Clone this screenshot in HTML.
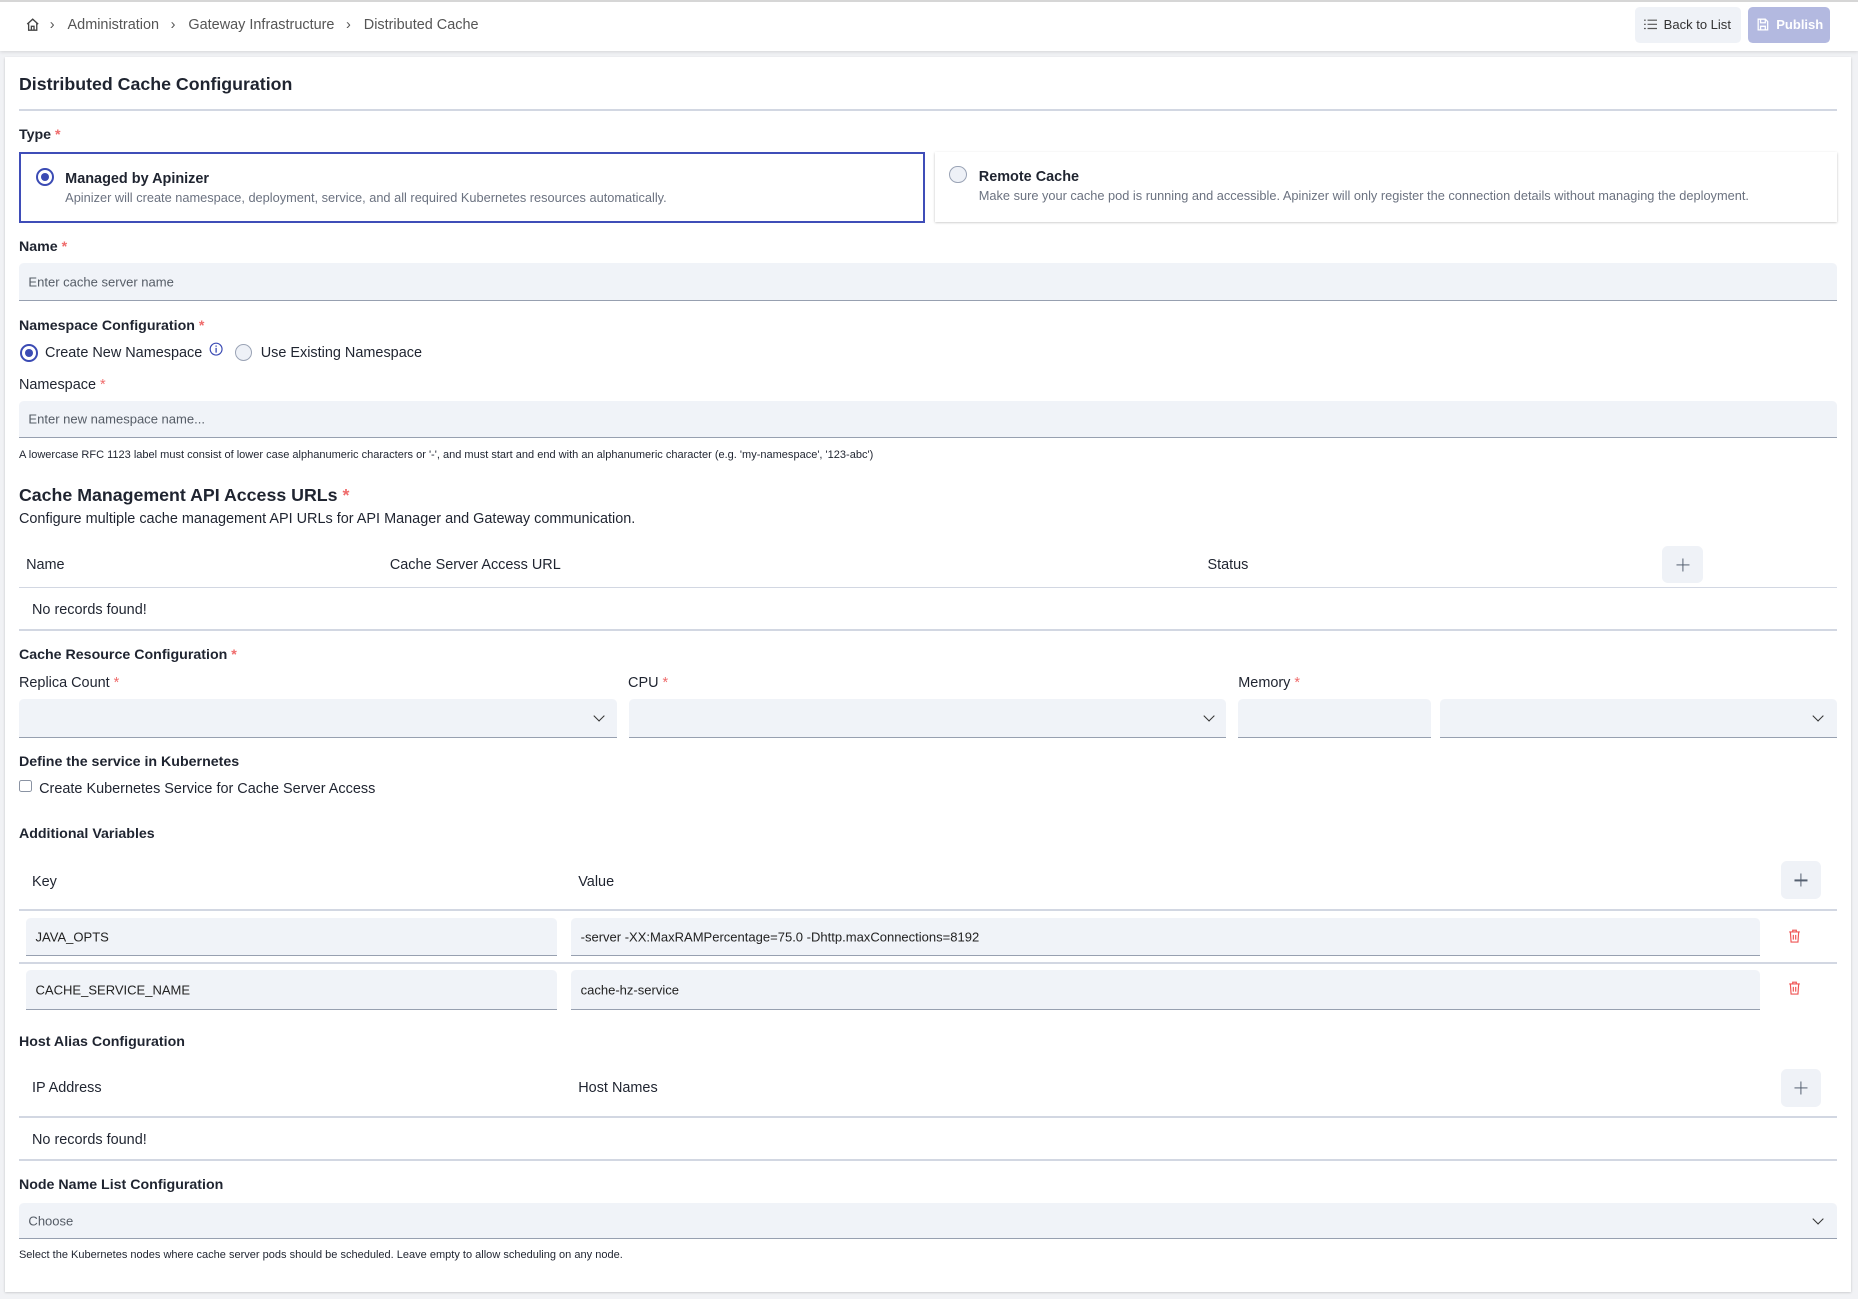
<!DOCTYPE html>
<html><head><meta charset="utf-8">
<style>
html,body{margin:0;padding:0}
body{width:1568px;height:1096px;zoom:1.18495;background:#f1f2f5;font-family:"Liberation Sans",Arial,sans-serif;color:#1f2430;position:relative;overflow:hidden}
.a{position:absolute;white-space:nowrap}
.t{position:absolute;white-space:nowrap;line-height:16px;font-size:12.2px;margin-top:1.5px}
.b{font-weight:bold}
.req{color:#ef6b6b}
.inp{position:absolute;background:#f0f3f8;border-bottom:1.5px solid #97a0b0;border-radius:4px 4px 0 0;box-sizing:border-box}
.ph{position:absolute;left:8px;top:50%;transform:translateY(-50%);font-size:11px;color:#555c66}
.hr{position:absolute;height:1.5px;background:#d2d7e2}
.plus{position:absolute;width:34px;height:31px;background:#eff2f7;border-radius:5px}
.plus:before,.plus:after{content:"";position:absolute;background:#556070;left:50%;top:50%}
.plus:before{width:11px;height:1px;transform:translate(-50%,-50%)}
.plus:after{width:1px;height:11px;transform:translate(-50%,-50%)}
.chev{position:absolute;width:6px;height:6px;border-right:1.3px solid #333;border-bottom:1.3px solid #333;transform:rotate(45deg)}
.radio{position:absolute;width:13px;height:13px;border-radius:50%;border:1.6px solid #9aa3b5;background:#eef1f7}
.radio.on{border:2px solid #3b4bb4;background:#fff;width:12px;height:12px}
.radio.on:after{content:"";position:absolute;left:2.5px;top:2.5px;width:7px;height:7px;border-radius:50%;background:#3b4bb4}
</style></head><body>
<div class="a" style="left:0;top:0;width:1568px;height:43px;background:#fff;box-shadow:0 1px 3px rgba(0,0,0,.12);border-top:2px solid #d6d6d6;box-sizing:border-box"></div>
<svg class="a" style="left:21px;top:14px" width="13" height="13" viewBox="0 0 14 14"><path d="M2 6.5L7 2l5 4.5M3.3 5.5V12h7.4V5.5M5.8 12V8.5h2.4V12" fill="none" stroke="#444" stroke-width="1.2"/></svg>
<div class="t" style="left:42px;top:12px;color:#555">›</div>
<div class="t" style="left:57px;top:12px;color:#555">Administration</div>
<div class="t" style="left:144px;top:12px;color:#555">›</div>
<div class="t" style="left:159px;top:12px;color:#555">Gateway Infrastructure</div>
<div class="t" style="left:292px;top:12px;color:#555">›</div>
<div class="t" style="left:307px;top:12px;color:#555">Distributed Cache</div>
<div class="a" style="left:1380px;top:6px;width:89px;height:30px;background:#eff2f7;border-radius:4px"></div>
<svg class="a" style="left:1387px;top:16px" width="11" height="9" viewBox="0 0 11 9"><path d="M0 1h1.5M3 1h8M0 4.5h1.5M3 4.5h8M0 8h1.5M3 8h8" stroke="#555" stroke-width="1"/></svg>
<div class="t" style="left:1404px;top:12px;font-size:11px;color:#333">Back to List</div>
<div class="a" style="left:1475px;top:6px;width:69px;height:30px;background:#b3b9e0;border-radius:4px"></div>
<svg class="a" style="left:1483px;top:15px" width="10" height="11" viewBox="0 0 10 11"><path d="M1 1h6l2 2v7H1zM3 1v3h4V1M3 10V7h4v3" fill="none" stroke="#fff" stroke-width="1.1"/></svg>
<div class="t b" style="left:1499px;top:12px;font-size:11px;color:#fff">Publish</div>

<div class="a" style="left:4px;top:48px;width:1558px;height:1042px;background:#fff;box-shadow:0 1px 2px rgba(0,0,0,.2)"></div>
<div class="t" style="left:16px;top:61px;font-size:15px;line-height:18px;font-weight:bold">Distributed Cache Configuration</div>
<div class="hr" style="left:16px;top:92px;width:1534px"></div>

<div class="t b" style="left:16px;top:105px;font-size:12px">Type <span class="req">*</span></div>
<div class="a" style="left:16px;top:128px;width:765px;height:60px;border:2px solid #3f4db8;box-sizing:border-box"></div>
<div class="radio on" style="left:30px;top:142px"></div>
<div class="t" style="left:55px;top:142px;font-weight:bold;font-size:12.2px">Managed by Apinizer</div>
<div class="t" style="left:55px;top:158px;font-size:10.8px;color:#6b7280">Apinizer will create namespace, deployment, service, and all required Kubernetes resources automatically.</div>
<div class="a" style="left:789px;top:128px;width:761px;height:59px;background:#fff;box-shadow:0 1px 2px rgba(0,0,0,.25)"></div>
<div class="radio" style="left:801px;top:140px"></div>
<div class="t" style="left:826px;top:140px;font-weight:bold;font-size:12.2px">Remote Cache</div>
<div class="t" style="left:826px;top:156px;font-size:10.8px;color:#6b7280">Make sure your cache pod is running and accessible. Apinizer will only register the connection details without managing the deployment.</div>

<div class="t b" style="left:16px;top:199px;font-size:12px">Name <span class="req">*</span></div>
<div class="inp" style="left:16px;top:222px;width:1534px;height:32px"><span class="ph">Enter cache server name</span></div>

<div class="t b" style="left:16px;top:266px;font-size:12px">Namespace Configuration <span class="req">*</span></div>
<div class="radio on" style="left:17px;top:290px"></div>
<div class="t" style="left:38px;top:289px">Create New Namespace</div>
<svg class="a" style="left:176px;top:289px" width="12" height="12" viewBox="0 0 12 12"><circle cx="6" cy="6" r="5" fill="none" stroke="#3b4bb4" stroke-width="1"/><path d="M6 5v4M6 3v1" stroke="#3b4bb4" stroke-width="1.1"/></svg>
<div class="radio" style="left:198px;top:290px"></div>
<div class="t" style="left:220px;top:289px">Use Existing Namespace</div>
<div class="t" style="left:16px;top:316px">Namespace <span class="req">*</span></div>
<div class="inp" style="left:16px;top:338px;width:1534px;height:32px"><span class="ph">Enter new namespace name...</span></div>
<div class="t" style="left:16px;top:375px;font-size:9.3px">A lowercase RFC 1123 label must consist of lower case alphanumeric characters or '-', and must start and end with an alphanumeric character (e.g. 'my-namespace', '123-abc')</div>

<div class="t" style="left:16px;top:408px;font-size:15px;line-height:18px;font-weight:bold">Cache Management API Access URLs <span class="req">*</span></div>
<div class="t" style="left:16px;top:429px">Configure multiple cache management API URLs for API Manager and Gateway communication.</div>
<div class="t" style="left:22px;top:468px">Name</div>
<div class="t" style="left:329px;top:468px">Cache Server Access URL</div>
<div class="t" style="left:1019px;top:468px">Status</div>
<div class="plus" style="left:1403px;top:461px"></div>
<div class="hr" style="left:16px;top:495px;width:1534px"></div>
<div class="t" style="left:27px;top:506px">No records found!</div>
<div class="hr" style="left:16px;top:531px;width:1534px"></div>

<div class="t b" style="left:16px;top:544px;font-size:12px">Cache Resource Configuration <span class="req">*</span></div>
<div class="t" style="left:16px;top:567px">Replica Count <span class="req">*</span></div>
<div class="t" style="left:530px;top:567px">CPU <span class="req">*</span></div>
<div class="t" style="left:1045px;top:567px">Memory <span class="req">*</span></div>
<div class="inp" style="left:16px;top:590px;width:505px;height:33px"></div><div class="chev" style="left:502px;top:601px"></div>
<div class="inp" style="left:531px;top:590px;width:504px;height:33px"></div><div class="chev" style="left:1017px;top:601px"></div>
<div class="inp" style="left:1045px;top:590px;width:163px;height:33px"></div>
<div class="inp" style="left:1215px;top:590px;width:335px;height:33px"></div><div class="chev" style="left:1531px;top:601px"></div>

<div class="t b" style="left:16px;top:634px;font-size:12px">Define the service in Kubernetes</div>
<div class="a" style="left:16px;top:658px;width:9px;height:9px;border:1.3px solid #8a93a3;border-radius:2px"></div>
<div class="t" style="left:33px;top:657px">Create Kubernetes Service for Cache Server Access</div>

<div class="t b" style="left:16px;top:695px;font-size:12px">Additional Variables</div>
<div class="t" style="left:27px;top:735px">Key</div>
<div class="t" style="left:488px;top:735px">Value</div>
<div class="plus" style="left:1503px;top:727px;height:32px"></div>
<div class="hr" style="left:16px;top:767px;width:1534px"></div>
<div class="inp" style="left:22px;top:775px;width:448px;height:32px"><span class="ph" style="color:#222">JAVA_OPTS</span></div>
<div class="inp" style="left:482px;top:775px;width:1003px;height:32px"><span class="ph" style="color:#222">-server -XX:MaxRAMPercentage=75.0 -Dhttp.maxConnections=8192</span></div>
<svg class="a" style="left:1509px;top:784px" width="11" height="12" viewBox="0 0 11 12"><path d="M1 2.5h9M4 2.5V1h3v1.5M2 2.5l.6 8.5h5.8l.6-8.5M4.5 5v4M6.5 5v4" fill="none" stroke="#ef5555" stroke-width="1"/></svg>
<div class="hr" style="left:16px;top:812px;width:1534px"></div>
<div class="inp" style="left:22px;top:819px;width:448px;height:33px"><span class="ph" style="color:#222">CACHE_SERVICE_NAME</span></div>
<div class="inp" style="left:482px;top:819px;width:1003px;height:33px"><span class="ph" style="color:#222">cache-hz-service</span></div>
<svg class="a" style="left:1509px;top:828px" width="11" height="12" viewBox="0 0 11 12"><path d="M1 2.5h9M4 2.5V1h3v1.5M2 2.5l.6 8.5h5.8l.6-8.5M4.5 5v4M6.5 5v4" fill="none" stroke="#ef5555" stroke-width="1"/></svg>

<div class="t b" style="left:16px;top:870px;font-size:12px">Host Alias Configuration</div>
<div class="t" style="left:27px;top:909px">IP Address</div>
<div class="t" style="left:488px;top:909px">Host Names</div>
<div class="plus" style="left:1503px;top:902px;height:32px"></div>
<div class="hr" style="left:16px;top:942px;width:1534px"></div>
<div class="t" style="left:27px;top:953px">No records found!</div>
<div class="hr" style="left:16px;top:978px;width:1534px"></div>

<div class="t b" style="left:16px;top:991px;font-size:12px">Node Name List Configuration</div>
<div class="inp" style="left:16px;top:1015px;width:1534px;height:31px"><span class="ph">Choose</span></div>
<div class="chev" style="left:1531px;top:1025px"></div>
<div class="t" style="left:16px;top:1050px;font-size:9.3px">Select the Kubernetes nodes where cache server pods should be scheduled. Leave empty to allow scheduling on any node.</div>
</body></html>
